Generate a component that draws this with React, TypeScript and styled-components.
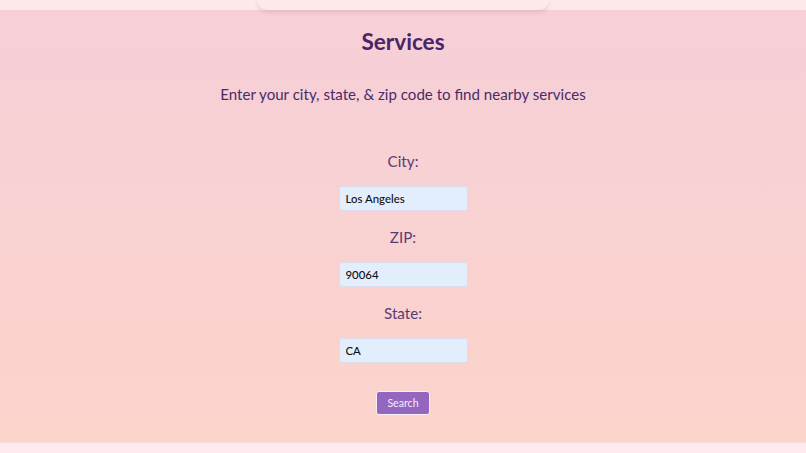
import React from 'react';
import styled, { createGlobalStyle } from 'styled-components';

const GlobalStyle = createGlobalStyle`
  html, body {
    margin: 0;
    padding: 0;
    height: 100%;
  }
  body {
    font-family: "Trebuchet MS", Lato, "Open Sans", sans-serif;
  }
`;

const Page = styled.div`
  min-height: 453px;
  display: flex;
  flex-direction: column;
`;

const TopBar = styled.header`
  height: 10px;
  background: #fde9ec;
  display: flex;
  justify-content: center;
  position: relative;
  z-index: 1;
`;

const NavShadow = styled.div`
  width: 292px;
  height: 10px;
  border-radius: 0 0 12px 12px;
  box-shadow: 0 2px 4px rgba(120, 60, 80, 0.16);
  background: #fde9ec;
`;

const Main = styled.main`
  flex: 1;
  background: linear-gradient(180deg, #f6cfd8 0%, #fbd4cb 100%);
  display: flex;
  flex-direction: column;
  align-items: center;
  padding-top: 17px;
`;

const Title = styled.h1`
  margin: 0;
  font-size: 22.6px;
  font-weight: bold;
  color: #4a2565;
  line-height: 30px;
`;

const Subtitle = styled.p`
  margin: 27px 0 0;
  font-size: 15.1px;
  color: #4b2a68;
  line-height: 20px;
`;

const Form = styled.form`
  display: flex;
  flex-direction: column;
  align-items: center;
  margin-top: 47px;
`;

const Label = styled.label`
  font-size: 15.2px;
  color: #5a3a75;
  line-height: 20px;
  margin-bottom: 15px;
`;

const Input = styled.input`
  box-sizing: border-box;
  width: 129px;
  height: 25px;
  padding: 0 6px;
  border: 1px solid #dcdcea;
  border-radius: 3px;
  background: #e3eefd;
  font-family: "Trebuchet MS", Lato, "Open Sans", sans-serif;
  font-size: 11.4px;
  font-weight: 500;
  color: #111;
  margin-bottom: 16px;
  outline: none;
`;

const Button = styled.button`
  margin-top: 12px;
  box-sizing: border-box;
  width: 54px;
  height: 24px;
  border: 1.5px solid #f8eef6;
  border-radius: 3px;
  background: #9566c0;
  color: #f4ecfa;
  font-family: "Trebuchet MS", Lato, "Open Sans", sans-serif;
  font-size: 10.6px;
  cursor: pointer;
`;

const Footer = styled.footer`
  height: 10px;
  background: #feeaed;
  border-top: 1px solid #f6dcdc;
`;

const fields = [
  { label: 'City:', value: 'Los Angeles' },
  { label: 'ZIP:', value: '90064' },
  { label: 'State:', value: 'CA' },
];

const App = () => {
  return (
    <Page>
      <GlobalStyle />
      <TopBar>
        <NavShadow />
      </TopBar>
      <Main>
        <Title>Services</Title>
        <Subtitle>Enter your city, state, &amp; zip code to find nearby services</Subtitle>
        <Form onSubmit={(e) => e.preventDefault()}>
          {fields.map((f) => (
            <React.Fragment key={f.label}>
              <Label>{f.label}</Label>
              <Input defaultValue={f.value} />
            </React.Fragment>
          ))}
          <Button type="submit">Search</Button>
        </Form>
      </Main>
      <Footer />
    </Page>
  );
};

export default App;
